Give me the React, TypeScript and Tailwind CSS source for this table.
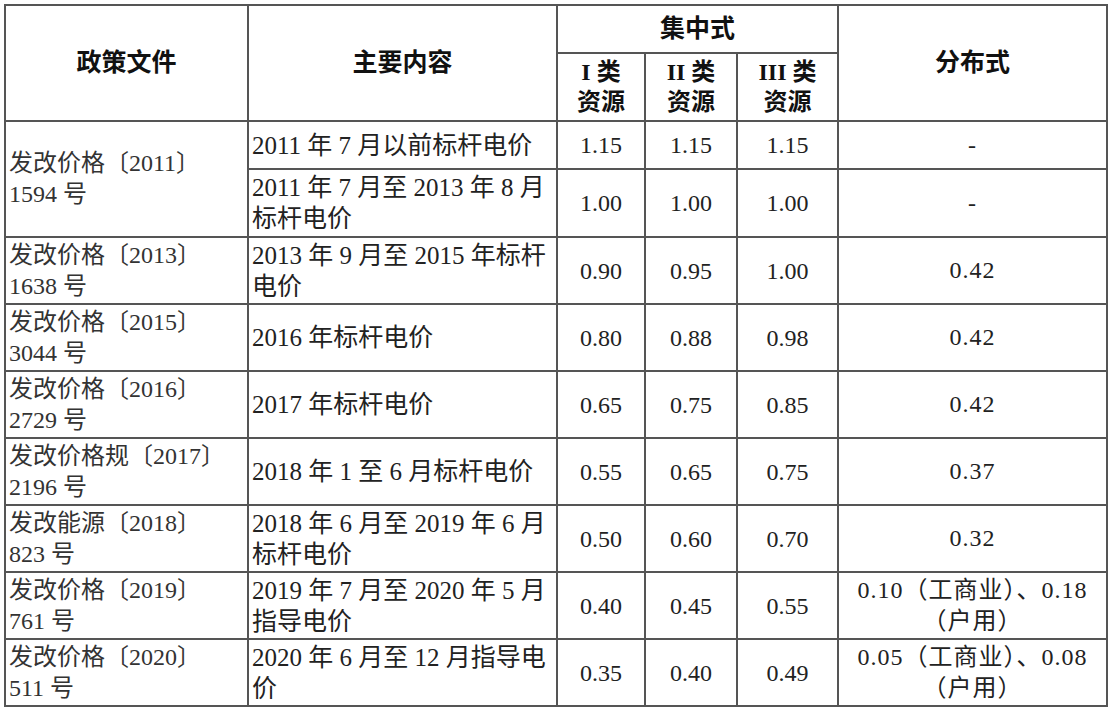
import React from 'react';

type Row = {
  doc?: string[];
  span?: number;
  content: string[];
  vals: [string, string, string];
  dist: string[];
  h: string;
};

const rows: Row[] = [
  {
    doc: ['发改价格〔2011〕', '1594 号'],
    span: 2,
    content: ['2011 年 7 月以前标杆电价'],
    vals: ['1.15', '1.15', '1.15'],
    dist: ['-'],
    h: 'h-[48px]',
  },
  {
    content: ['2011 年 7 月至 2013 年 8 月', '标杆电价'],
    vals: ['1.00', '1.00', '1.00'],
    dist: ['-'],
    h: 'h-[68px]',
  },
  {
    doc: ['发改价格〔2013〕', '1638 号'],
    content: ['2013 年 9 月至 2015 年标杆', '电价'],
    vals: ['0.90', '0.95', '1.00'],
    dist: ['0.42'],
    h: 'h-[67px]',
  },
  {
    doc: ['发改价格〔2015〕', '3044 号'],
    content: ['2016 年标杆电价'],
    vals: ['0.80', '0.88', '0.98'],
    dist: ['0.42'],
    h: 'h-[67px]',
  },
  {
    doc: ['发改价格〔2016〕', '2729 号'],
    content: ['2017 年标杆电价'],
    vals: ['0.65', '0.75', '0.85'],
    dist: ['0.42'],
    h: 'h-[67px]',
  },
  {
    doc: ['发改价格规〔2017〕', '2196 号'],
    content: ['2018 年 1 至 6 月标杆电价'],
    vals: ['0.55', '0.65', '0.75'],
    dist: ['0.37'],
    h: 'h-[67px]',
  },
  {
    doc: ['发改能源〔2018〕', '823 号'],
    content: ['2018 年 6 月至 2019 年 6 月', '标杆电价'],
    vals: ['0.50', '0.60', '0.70'],
    dist: ['0.32'],
    h: 'h-[67px]',
  },
  {
    doc: ['发改价格〔2019〕', '761 号'],
    content: ['2019 年 7 月至 2020 年 5 月', '指导电价'],
    vals: ['0.40', '0.45', '0.55'],
    dist: ['0.10（工商业）、0.18', '（户用）'],
    h: 'h-[67px]',
  },
  {
    doc: ['发改价格〔2020〕', '511 号'],
    content: ['2020 年 6 月至 12 月指导电', '价'],
    vals: ['0.35', '0.40', '0.49'],
    dist: ['0.05（工商业）、0.08', '（户用）'],
    h: 'h-[67px]',
  },
];

// shared cell look: 2px grey rules, tiny inner padding
const cell = 'border-2 border-[#555] px-[3px] align-middle';

function Lines({ items }: { items: string[] }) {
  return (
    <>
      {items.map((t, i) => (
        <div key={i} className="whitespace-nowrap">
          {t}
        </div>
      ))}
    </>
  );
}

export default function App() {
  return (
    <div
      className="min-h-screen bg-white pt-[4px] pl-[4px] text-[#222]"
      style={{ fontFamily: '"Liberation Serif", "Noto Sans CJK SC", serif' }}
    >
      <table className="table-fixed border-collapse w-[1102px]">
        <colgroup>
          <col className="w-[243px]" />
          <col className="w-[309px]" />
          <col className="w-[88px]" />
          <col className="w-[92px]" />
          <col className="w-[101px]" />
          <col className="w-[269px]" />
        </colgroup>
        <thead>
          <tr className="h-[48px]">
            <th rowSpan={2} className={`${cell} text-[25px] font-bold text-[#111]`}>
              政策文件
            </th>
            <th rowSpan={2} className={`${cell} text-[25px] font-bold text-[#111]`}>
              主要内容
            </th>
            <th colSpan={3} className={`${cell} text-[25px] font-bold text-[#111]`}>
              集中式
            </th>
            <th rowSpan={2} className={`${cell} text-[25px] font-bold text-[#111]`}>
              分布式
            </th>
          </tr>
          <tr className="h-[68px]">
            {['I 类', 'II 类', 'III 类'].map((t) => (
              <th key={t} className={`${cell} text-[24px] leading-[30px] font-bold text-[#111]`}>
                <div>{t}</div>
                <div>资源</div>
              </th>
            ))}
          </tr>
        </thead>
        <tbody>
          {rows.map((r, i) => (
            <tr key={i} className={r.h}>
              {r.doc && (
                <td rowSpan={r.span} className={`${cell} text-[24px] leading-[31px] text-[#333]`}>
                  <Lines items={r.doc} />
                </td>
              )}
              <td className={`${cell} text-[25px] leading-[31px]`}>
                <Lines items={r.content} />
              </td>
              {r.vals.map((v, j) => (
                <td key={j} className={`${cell} text-center text-[24px]`}>
                  {v}
                </td>
              ))}
              <td className={`${cell} text-center text-[24px] leading-[31px] tracking-[1px]`}>
                <Lines items={r.dist} />
              </td>
            </tr>
          ))}
        </tbody>
      </table>
    </div>
  );
}
